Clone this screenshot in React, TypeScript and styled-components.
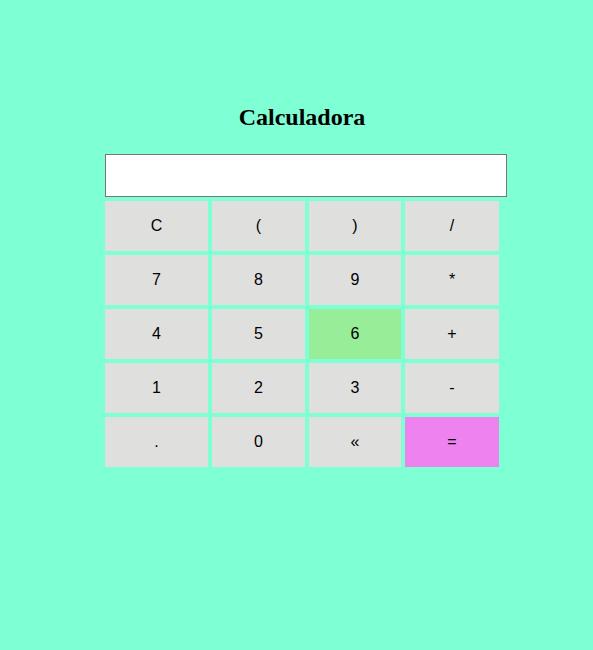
import React, { useState } from "react";
import styled, { createGlobalStyle } from "styled-components";

const Global = createGlobalStyle`
  html, body {
    margin: 0;
    padding: 0;
    background: #7fffd4;
  }
`;

const Page = styled.div`
  min-height: 650px;
  display: flex;
  justify-content: center;
  padding: 103px 0 0 11px;
  box-sizing: border-box;
  background: #7fffd4;
`;

const Calc = styled.div`
  width: 394px;
  display: flex;
  flex-direction: column;
`;

const Title = styled.h2`
  margin: 0 0 23px;
  font-family: "Liberation Serif", "Times New Roman", serif;
  font-size: 24px;
  font-weight: bold;
  line-height: 28px;
  text-align: center;
  color: #000;
`;

const Display = styled.input`
  width: 402px;
  height: 43px;
  box-sizing: border-box;
  margin: 0 0 4px;
  border: 1px solid #767676;
  background: #fff;
  font-family: "Liberation Sans", Arial, sans-serif;
  font-size: 16px;
  padding: 1px 4px;
  outline: none;
`;

const Keys = styled.div`
  display: grid;
  grid-template-columns: 103px 93px 92px 94px;
  grid-auto-rows: 50px;
  gap: 4px;
`;

type Tone = "plain" | "green" | "violet";

const Key = styled.button<{ $tone: Tone }>`
  border: none;
  margin: 0;
  padding: 0;
  font-family: "Liberation Sans", Arial, sans-serif;
  font-size: 16px;
  color: #000;
  cursor: pointer;
  background: ${(p) =>
    p.$tone === "green" ? "#98ee98" : p.$tone === "violet" ? "#ee82ee" : "#dfdfdd"};
`;

const keys: { label: string; tone?: Tone }[] = [
  { label: "C" }, { label: "(" }, { label: ")" }, { label: "/" },
  { label: "7" }, { label: "8" }, { label: "9" }, { label: "*" },
  { label: "4" }, { label: "5" }, { label: "6", tone: "green" }, { label: "+" },
  { label: "1" }, { label: "2" }, { label: "3" }, { label: "-" },
  { label: "." }, { label: "0" }, { label: "«" }, { label: "=", tone: "violet" },
];

export default function App() {
  const [value, setValue] = useState("");

  const press = (k: string) => {
    if (k === "C") setValue("");
    else if (k === "«") setValue((v) => v.slice(0, -1));
    else if (k === "=") {
      try {
        // eslint-disable-next-line no-new-func
        const r = Function(`"use strict"; return (${value || "0"})`)();
        setValue(String(r));
      } catch {
        setValue("Error");
      }
    } else setValue((v) => v + k);
  };

  return (
    <>
      <Global />
      <Page>
        <Calc>
          <Title>Calculadora</Title>
          <Display value={value} onChange={(e) => setValue(e.target.value)} />
          <Keys>
            {keys.map((k) => (
              <Key key={k.label} $tone={k.tone ?? "plain"} onClick={() => press(k.label)}>
                {k.label}
              </Key>
            ))}
          </Keys>
        </Calc>
      </Page>
    </>
  );
}
